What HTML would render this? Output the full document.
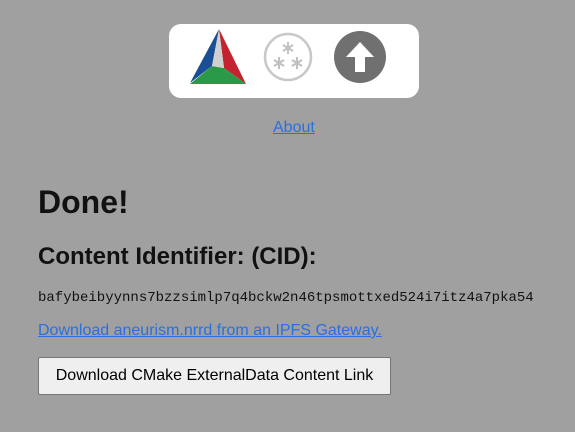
<!DOCTYPE html>
<html><head><style>
body{margin:0;background:#a0a0a0;font-family:"Liberation Sans",sans-serif;width:575px;height:432px;overflow:hidden;position:relative;color:#111}
.box{position:absolute;left:169px;top:24px;width:250px;height:74px;background:#fff;border-radius:12px}
a{color:#2a6fe0;text-decoration:underline}
.t{position:absolute;white-space:nowrap}
</style></head><body>
<div class="box"></div>
<svg style="position:absolute;left:0;top:0" width="575" height="110">
<polygon points="219,29 190,83 212,66" fill="#1a4f95"/>
<polygon points="219,29 246,84 224,68" fill="#c4222e"/>
<polygon points="190,84 246,84 224,68 212,66" fill="#2a9a48"/>
<polygon points="219,29 212,66 224,68" fill="#d0d0d0"/>
<circle cx="288" cy="57" r="23" fill="none" stroke="#c8c8c8" stroke-width="2.5"/>
<g stroke="#c0c0c0" stroke-width="2" fill="none">
<path d="M288,42v12M283,45l10,6M293,45l-10,6"/>
<path d="M279,57v12M274,60l10,6M284,60l-10,6"/>
<path d="M297,57v12M292,60l10,6M302,60l-10,6"/>
</g>
<circle cx="360" cy="57" r="26" fill="#707070"/>
<polygon points="360,42 374,57 365,57 365,72 355,72 355,57 346,57" fill="#fff"/>
</svg>
<a class="t" style="left:273px;top:119px;font-size:16px">About</a>
<div class="t" style="left:38px;top:184px;font-size:32px;font-weight:bold">Done!</div>
<div class="t" style="left:38px;top:243px;font-size:24px;font-weight:bold">Content Identifier: (CID):</div>
<div class="t" style="left:38px;top:290px;font-size:14px;font-family:'Liberation Mono',monospace">bafybeibyynns7bzzsimlp7q4bckw2n46tpsmottxed524i7itz4a7pka54</div>
<a class="t" style="left:38px;top:322px;font-size:16px">Download aneurism.nrrd from an IPFS Gateway.</a>
<div class="t" style="left:38px;top:357px;width:351px;height:36px;background:#efefef;border:1px solid #767676;border-radius:2px;font-size:16px;line-height:36px;text-align:center;color:#000">Download CMake ExternalData Content Link</div>
</body></html>
